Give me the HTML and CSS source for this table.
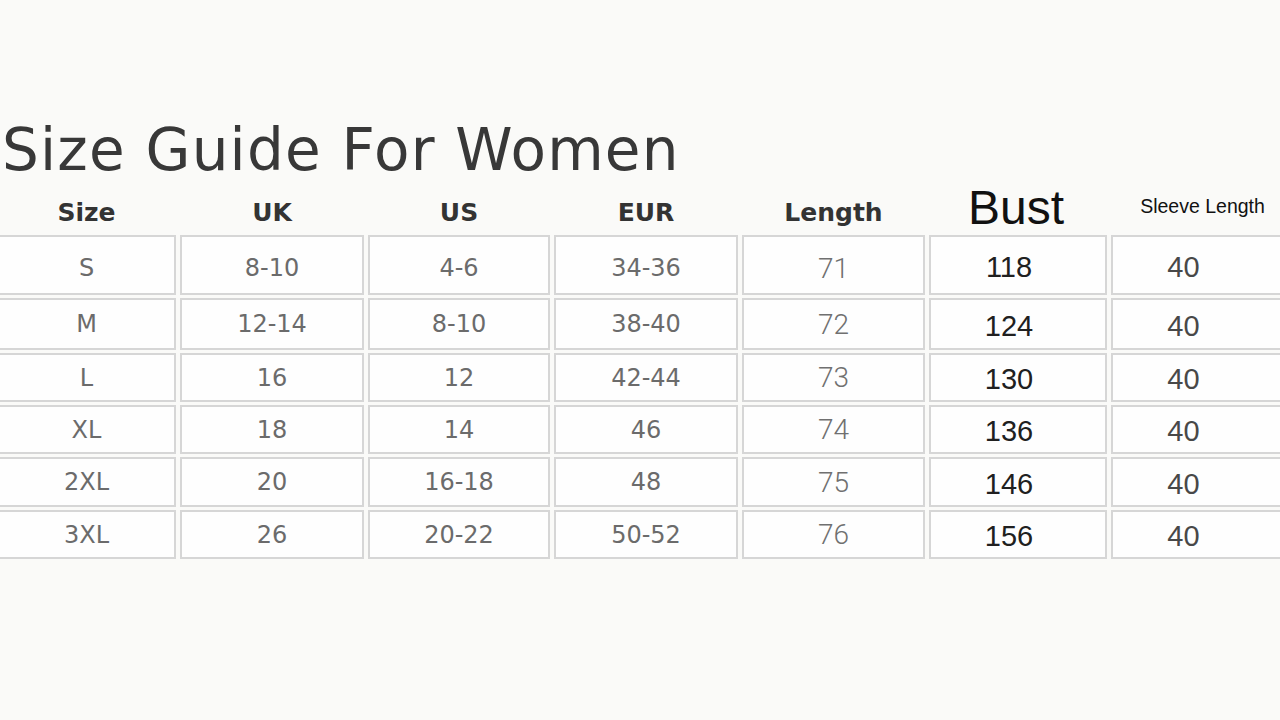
FILE: index.html
```html
<!DOCTYPE html>
<html lang="en">
<head>
<meta charset="utf-8">
<title>Size Guide For Women</title>
<link rel="stylesheet" href="styles.css">
</head>
<body>
<main class="page">
  <h1 class="title">Size Guide For Women</h1>
  <div class="chart">
    <div class="head geo">Size</div>
    <div class="head geo">UK</div>
    <div class="head geo">US</div>
    <div class="head geo">EUR</div>
    <div class="head geo">Length</div>
    <div class="head bust">Bust</div>
    <div class="head sleeve">Sleeve Length</div>

    <div class="cell top geo">S</div><div class="cell top geo">8-10</div><div class="cell top geo">4-6</div><div class="cell top geo">34-36</div><div class="cell top len">71</div><div class="cell bst">118</div><div class="cell slv">40</div>
    <div class="cell geo">M</div><div class="cell geo">12-14</div><div class="cell geo">8-10</div><div class="cell geo">38-40</div><div class="cell len">72</div><div class="cell bst">124</div><div class="cell slv">40</div>
    <div class="cell geo">L</div><div class="cell geo">16</div><div class="cell geo">12</div><div class="cell geo">42-44</div><div class="cell len">73</div><div class="cell bst">130</div><div class="cell slv">40</div>
    <div class="cell geo">XL</div><div class="cell geo">18</div><div class="cell geo">14</div><div class="cell geo">46</div><div class="cell len">74</div><div class="cell bst">136</div><div class="cell slv">40</div>
    <div class="cell geo">2XL</div><div class="cell geo">20</div><div class="cell geo">16-18</div><div class="cell geo">48</div><div class="cell len">75</div><div class="cell bst">146</div><div class="cell slv">40</div>
    <div class="cell geo">3XL</div><div class="cell geo">26</div><div class="cell geo">20-22</div><div class="cell geo">50-52</div><div class="cell len">76</div><div class="cell bst">156</div><div class="cell slv">40</div>
  </div>
</main>
</body>
</html>
```

FILE: styles.css
```css
html, body {
  margin: 0;
  padding: 0;
  background: #fafaf8;
  height: 100%;
  overflow: hidden;
}

.page {
  display: flex;
  flex-direction: column;
  padding-top: 112px;
  width: 1290px;
}

.title {
  margin: 0 0 0 2px;
  font-family: "DejaVu Sans", sans-serif;
  font-weight: 400;
  font-size: 58px;
  line-height: 76px;
  color: #383838;
  letter-spacing: 1.2px;
}

.chart {
  display: grid;
  grid-template-columns: 179px 184px 182px 184px 183px 178px 175px;
  grid-template-rows: 44px 60px 52px 49px 49px 50px 49px;
  column-gap: 4px;
  row-gap: 3px;
  margin-left: -3px;
}

.head {
  display: flex;
  align-items: center;
  justify-content: center;
  color: #333;
}

.head.geo {
  font-family: "DejaVu Sans", sans-serif;
  font-weight: 700;
  font-size: 25px;
  padding-top: 4px;
}

.head.bust {
  font-family: "Liberation Sans", Arial, sans-serif;
  font-size: 48px;
  color: #111;
  padding-bottom: 6px;
  padding-right: 4px;
}

.head.sleeve {
  font-family: "Liberation Sans", Arial, sans-serif;
  font-size: 19.5px;
  color: #111;
  padding-bottom: 8px;
  padding-left: 8px;
}

.cell {
  display: flex;
  align-items: center;
  justify-content: center;
  background: #fefefe;
  border: 2px solid #d6d6d6;
  box-sizing: border-box;
}

.cell.top {
  padding-top: 6px;
}

.cell.geo {
  font-family: "DejaVu Sans", sans-serif;
  font-size: 24px;
  color: #6b6b6b;
}

.cell.len {
  font-family: Roboto, sans-serif;
  font-weight: 300;
  font-size: 28px;
  color: #707070;
}

.cell.bst {
  font-family: "Liberation Sans", Arial, sans-serif;
  font-size: 29px;
  color: #202020;
  padding-top: 4px;
  padding-right: 18px;
}

.cell.slv {
  font-family: "Liberation Sans", Arial, sans-serif;
  font-size: 29px;
  color: #484848;
  padding-top: 4px;
  padding-right: 30px;
}
```
